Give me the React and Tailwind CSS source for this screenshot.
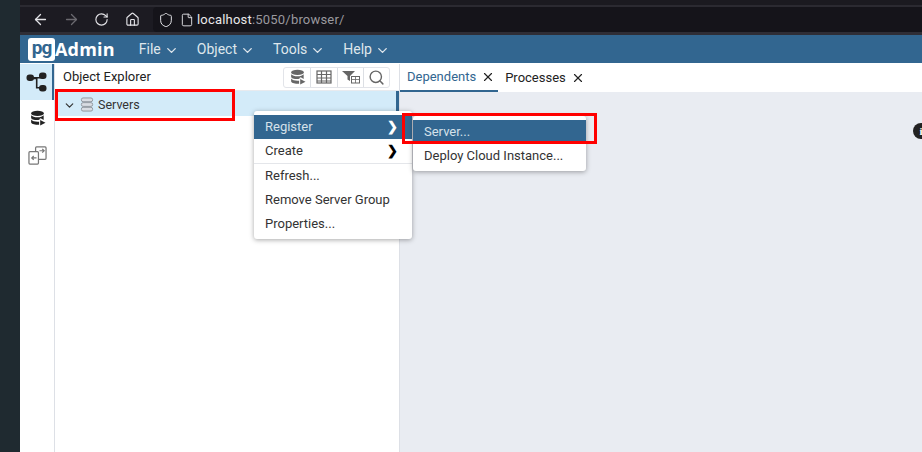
import React from 'react';
import { ArrowLeft, ArrowRight, RotateCw, Home, Shield, File, ChevronDown, X, Search } from 'lucide-react';

const DbStack = ({ className }) => (
  <svg viewBox="0 0 16 16" className={className} fill="currentColor">
    <ellipse cx="8" cy="3.2" rx="6" ry="2.4" />
    <path d="M2 5v2.2c0 1.3 2.700 2.300 6 2.300 1.200 0 2.300-.1 3.200-.4L9 9l2-1.200 2.800 1.500V5c-1 1.200-3.200 1.900-5.800 1.900S3 6.200 2 5z" />
    <path d="M2 9v2.500c0 1.300 2.700 2.400 6 2.400.5 0 1-.1 1.500-.1V11c-.5.100-1 .1-1.500.1-2.600 0-5-.8-6-2.100z" />
    <path d="M10.500 9.500v5l5-2.500z" />
  </svg>
);

const TreeIcon = ({ className }) => (
  <svg viewBox="0 0 20 20" className={className} fill="currentColor">
    <rect x="0" y="2.500" width="7.500" height="6.500" rx="3" />
    <rect x="12.500" y="0.500" width="7.500" height="6.500" rx="3" />
    <rect x="12.500" y="13" width="7.500" height="6.500" rx="3" />
    <path d="M6 5h8v1.600h-3V15h3v1.600H9.400V7.200H6z" />
  </svg>
);

const SchemaDiff = ({ className }) => (
  <svg viewBox="0 0 20 20" className={className} fill="none" stroke="currentColor" strokeWidth="1.300">
    <rect x="1" y="6" width="10" height="13" rx="1" />
    <path d="M8 6V2a1 1 0 0 1 1-1h9a1 1 0 0 1 1 1v11a1 1 0 0 1-1 1h-7" />
    <path d="M9 12.500H4m2-2-2 2 2 2M12 5h5m-2-2 2 2-2 2" />
  </svg>
);

const ServersIcon = ({ className }) => (
  <svg viewBox="0 0 14 16" className={className} fill="#d9dde3" stroke="#8f949c" strokeWidth="1">
    <rect x="1" y="1" width="12" height="4" rx="1.800" />
    <rect x="1" y="6" width="12" height="4" rx="1.800" />
    <rect x="1" y="11" width="12" height="4" rx="1.800" />
  </svg>
);

const GridIcon = ({ className }) => (
  <svg viewBox="0 0 16 14" className={className} fill="none" stroke="currentColor" strokeWidth="1.200">
    <rect x="1" y="1" width="14" height="12" />
    <path d="M1 4.500h14M1 8h14M1 11h14M5.500 1v12M10.500 1v12" />
  </svg>
);

const FilterTable = ({ className }) => (
  <svg viewBox="0 0 18 14" className={className} fill="currentColor">
    <path d="M0 1h13L8 6v5L5.500 9.500V6z" />
    <rect x="9.500" y="6.500" width="8" height="6.500" fill="none" stroke="currentColor" strokeWidth="1" />
    <path d="M9.500 9.500h8M13.500 6.500V13" stroke="currentColor" strokeWidth="0.800" />
  </svg>
);

const Logo = () => (
  <div className="flex items-center">
    <div className="flex items-center justify-center h-[23px] w-[27px] bg-white rounded-[3px] text-[#326690] text-[19px] font-bold leading-none tracking-[-1px] pb-[3px]">pg</div>
    <span className="text-white text-[18px] font-bold leading-none font-['Open_Sans',sans-serif] tracking-[0.2px]">Admin</span>
  </div>
);

const NavMenu = ({ label }) => (
  <div className="flex items-center gap-[3px] text-[#dfe6ec] text-[14px]">
    {label}
    <ChevronDown className="w-[15px] h-[15px] mt-[2px]" strokeWidth={2.200} />
  </div>
);

const MenuItem = ({ label, active, arrow, className = '' }) => (
  <div className={`flex items-center justify-between px-[11px] text-[13px] ${active ? 'bg-[#326690] text-[#d5e1ea]' : 'text-[#333]'} ${className}`}>
    <span>{label}</span>
    {arrow && <span className={`text-[13px] font-bold pr-[3px] ${active ? 'text-white' : 'text-black'}`}>❯</span>}
  </div>
);

export default function App() {
  return (
    <div className="relative w-[922px] h-[452px] overflow-hidden flex bg-white font-['Roboto',sans-serif]">
      <div className="w-5 bg-[#1f2a30] shrink-0" />

      <div className="flex-1 flex flex-col min-w-0">
        {/* Browser bar */}
        <div className="h-[35px] bg-[#1c1b22] shrink-0 flex flex-col">
          <div className="h-[7px] bg-[#1b1a20] border-b-2 border-[#2b2a31] flex-none" />
          <div className="flex-1 flex items-center pl-[12px] text-[#e4e4e8] border-b-[3px] border-[#2f2e36]">
            <ArrowLeft className="w-[17px] h-[17px]" strokeWidth={1.800} />
            <ArrowRight className="w-[17px] h-[17px] ml-[14px] text-[#6b6a70]" strokeWidth={1.800} />
            <RotateCw className="w-[15px] h-[15px] ml-[14px]" strokeWidth={1.800} />
            <Home className="w-[15px] h-[15px] ml-[16px]" strokeWidth={1.800} />
            <div className="ml-[13px] flex-1 h-full bg-[#15141a] rounded-l flex items-center pl-[5px]">
              <Shield className="w-[16px] h-[16px]" strokeWidth={1.500} />
              <File className="w-[14px] h-[14px] ml-[6px]" strokeWidth={1.600} />
              <span className="ml-[3px] text-[13px] tracking-[0.2px] text-[#e8e8ea]">localhost<span className="text-[#9a999f]">:5050/browser/</span></span>
            </div>
          </div>
        </div>

        {/* pgAdmin nav */}
        <div className="h-[28px] bg-[#326690] shrink-0 flex items-center pl-[8px]">
          <Logo />
          <div className="flex items-center gap-[18px] ml-[24px]">
            <NavMenu label="File" />
            <NavMenu label="Object" />
            <NavMenu label="Tools" />
            <NavMenu label="Help" />
          </div>
        </div>

        <div className="flex-1 flex min-h-0 border-t border-white">
          {/* Sidebar */}
          <div className="w-[35px] shrink-0 border-r border-[#dde0e6] flex flex-col items-center">
            <div className="w-full h-[36px] bg-[#d3ebf9] border-r-2 border-[#326690] flex items-center justify-center text-[#222]">
              <TreeIcon className="w-[21px] h-[20px]" />
            </div>
            <div className="h-[36px] flex items-center justify-center text-[#222]">
              <DbStack className="w-[17px] h-[17px]" />
            </div>
            <div className="h-[38px] flex items-center justify-center text-[#777]">
              <SchemaDiff className="w-[19px] h-[19px]" />
            </div>
          </div>

          {/* Object Explorer */}
          <div className="w-[345px] shrink-0 flex flex-col border-r border-[#dde0e6]">
            <div className="h-[27px] flex items-center justify-between pl-[8px] pr-[9px] border-b border-[#e8eaee]">
              <span className="text-[13px] text-[#222]">Object Explorer</span>
              <div className="flex h-[21px] border border-[#e2e4e9] rounded-[3px] text-[#666]">
                <div className="w-[26px] flex items-center justify-center"><DbStack className="w-[17px] h-[17px]" /></div>
                <div className="w-[27px] flex items-center justify-center border-l border-[#dcdfe4]"><GridIcon className="w-[16px] h-[14px]" /></div>
                <div className="w-[26px] flex items-center justify-center border-l border-[#dcdfe4]"><FilterTable className="w-[18px] h-[14px]" /></div>
                <div className="w-[26px] flex items-center justify-center border-l border-[#dcdfe4]"><Search className="w-[17px] h-[17px]" /></div>
              </div>
            </div>
            <div className="h-[25px] bg-[#d3ebf9] border-r-[3px] border-[#326690] flex items-center pl-[8px] text-[#333]">
              <ChevronDown className="w-[13px] h-[13px] mt-[4px]" strokeWidth={2.200} />
              <ServersIcon className="w-[14px] h-[15px] ml-[4px] mt-[1px]" />
              <span className="ml-[4px] text-[12.500px] mt-[3px]">Servers</span>
            </div>
          </div>

          {/* Right panel */}
          <div className="flex-1 flex flex-col bg-[#e9ecf2] relative">
            <div className="h-[28px] bg-white flex items-end shrink-0">
              <div className="h-full pl-[7px] pr-[3px] border-b-2 border-[#326690] flex items-center gap-[5px] text-[13px] text-[#326690]">
                Dependents <X className="w-[14px] h-[14px] text-[#222]" strokeWidth={2} />
              </div>
              <div className="h-full pl-[7px] flex items-center gap-[5px] text-[13px] text-[#222]">
                Processes <X className="w-[14px] h-[14px]" strokeWidth={2} />
              </div>
            </div>
            <div className="absolute left-[513px] top-[59px] w-[16px] h-[16px] rounded-full bg-[#222] text-white flex items-center justify-center">
              <span className="text-[11px] font-bold font-['Liberation_Serif',serif]">i</span>
            </div>
          </div>
        </div>
      </div>

      {/* Context menu */}
      <div className="absolute left-[254px] top-[111px] w-[158px] bg-white rounded-[3px] shadow-[0_1px_5px_rgba(0,0,0,0.35)] pt-[4px] pb-[3px]">
        <MenuItem label="Register" active arrow className="h-6" />
        <MenuItem label="Create" arrow className="h-[25px] border-b border-[#e4e6ea]" />
        <MenuItem label="Refresh..." className="h-6" />
        <MenuItem label="Remove Server Group" className="h-6" />
        <MenuItem label="Properties..." className="h-6" />
      </div>

      {/* Submenu */}
      <div className="absolute left-[413px] top-[116px] w-[173px] bg-white rounded-[3px] shadow-[0_1px_5px_rgba(0,0,0,0.35)] pt-[4px] pb-[3px]">
        <MenuItem label="Server..." active className="h-6" />
        <MenuItem label="Deploy Cloud Instance..." className="h-6" />
      </div>

      {/* Annotation boxes */}
      <div className="absolute left-[55px] top-[89px] w-[180px] h-[32px] border-[3px] border-[#f00]" />
      <div className="absolute left-[402px] top-[113px] w-[195px] h-[31px] border-[3px] border-[#f00]" />
    </div>
  );
}
